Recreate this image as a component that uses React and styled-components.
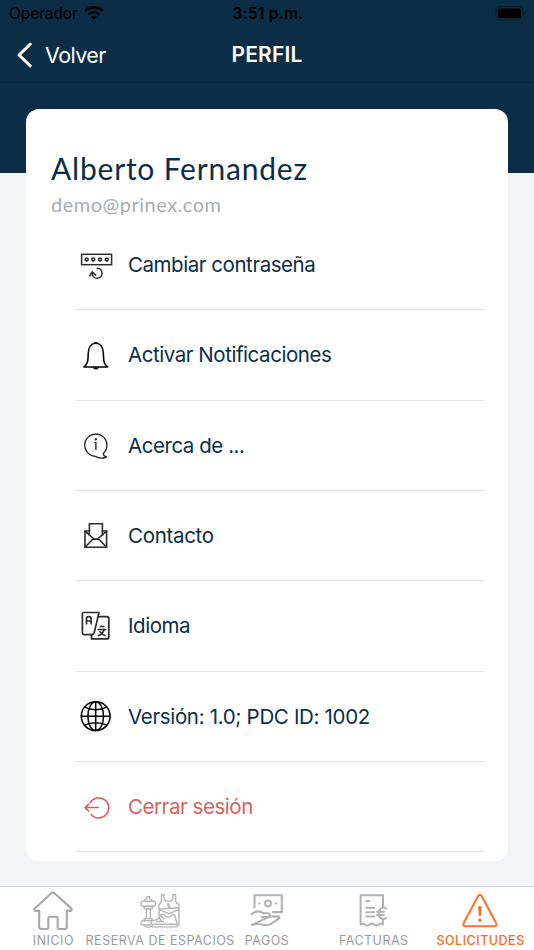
import React from 'react';
import styled, { createGlobalStyle } from 'styled-components';

const GlobalStyle = createGlobalStyle`
  * {
    box-sizing: border-box;
  }
  body {
    margin: 0;
    background: #f3f4f6;
    font-family: Inter, 'Liberation Sans', sans-serif;
  }
`;

const Page = styled.div`
  display: flex;
  flex-direction: column;
  width: 534px;
  height: 950px;
  overflow: hidden;
`;

const StatusBar = styled.div`
  display: grid;
  grid-template-columns: 1fr auto 1fr;
  align-items: center;
  height: 28px;
  padding: 0 7px 1px 9px;
  background: #0b2e46;
  color: #000;
  font-size: 15.5px;
`;

const Carrier = styled.div`
  display: flex;
  align-items: center;
  gap: 6px;
  letter-spacing: -0.1px;
`;

const Clock = styled.div`
  font-weight: 600;
  letter-spacing: 0.25px;
`;

const Battery = styled.div`
  display: flex;
  justify-content: flex-end;
`;

const NavBar = styled.header`
  display: grid;
  grid-template-columns: 1fr auto 1fr;
  align-items: center;
  height: 55px;
  padding: 0 16px 1px;
  background: #0b2e46;
  border-bottom: 1px solid #0a2940;
  color: #fff;
`;

const BackButton = styled.button`
  display: flex;
  align-items: center;
  gap: 11px;
  padding: 0;
  border: none;
  background: none;
  color: inherit;
  font-family: inherit;
  font-size: 21.5px;
  letter-spacing: -0.6px;
`;

const Title = styled.h1`
  margin: 0;
  font-size: 21px;
  font-weight: 600;
  letter-spacing: 0.2px;
`;

const Content = styled.main`
  flex: 1;
  padding: 26px 26px 0;
  background: linear-gradient(#0b2e46 90px, #f3f4f6 90px);
`;

const Card = styled.section`
  height: 752px;
  padding: 38px 24px 0 25px;
  border-radius: 13px;
  background: #fff;
`;

const Name = styled.div`
  font-family: Lato, sans-serif;
  font-size: 30px;
  line-height: 42px;
  letter-spacing: 0.8px;
  color: #0b2e46;
  white-space: nowrap;
`;

const Email = styled.div`
  font-family: Lato, sans-serif;
  font-size: 20px;
  line-height: 31px;
  letter-spacing: 0.5px;
  color: #a9acb1;
`;

const Menu = styled.ul`
  margin: 0 0 0 25px;
  padding: 0;
  list-style: none;
`;

const MenuRow = styled.li`
  display: flex;
  align-items: center;
  gap: 12px;
  height: 90.33px;
  border-bottom: 1px solid #e2e3e4;
  color: ${({ $danger }) => ($danger ? '#d9605f' : '#0b2e46')};
  font-size: 20.5px;
  letter-spacing: ${({ $spacing }) => $spacing || -0.45}px;
  white-space: nowrap;
`;

const RowIcon = styled.svg`
  flex: none;
  width: 40px;
  height: 40px;
  fill: none;
  stroke: ${({ $color }) => $color || '#2c2c2c'};
  stroke-width: ${({ $weight }) => $weight || 1.4};
  stroke-linecap: round;
  stroke-linejoin: round;
`;

const TabBar = styled.nav`
  display: grid;
  grid-template-columns: repeat(5, 1fr);
  height: 64px;
  border-top: 1px solid #d3d4d5;
  background: #fff;
`;

const Tab = styled.div`
  display: flex;
  flex-direction: column;
  align-items: center;
  min-width: 0;
  padding-top: 3px;
  color: ${({ $active }) => ($active ? '#f26f21' : '#9b9b9b')};
  font-size: 12.5px;
  font-weight: ${({ $active }) => ($active ? 500 : 400)};
  line-height: 17px;
  letter-spacing: 0.5px;
  white-space: nowrap;
`;

const TabIcon = styled.svg`
  flex: none;
  width: 44px;
  height: 40px;
  margin-bottom: 2px;
  fill: none;
  stroke: ${({ $color }) => $color || '#a9a9a9'};
  stroke-width: ${({ $weight }) => $weight || 1.8};
  stroke-linecap: round;
  stroke-linejoin: round;
`;

const WifiIcon = () => (
  <svg width='20' height='15' viewBox='0 0 20 15' fill='none' stroke='#000' strokeWidth='2.7'>
    <path d='M1.3 4.9C6.2.1 13.8.1 18.7 4.9' />
    <path d='M4.6 8.4c3-2.9 7.8-2.9 10.8 0' />
    <path d='M7.2 10.8c1.6-1.4 4-1.4 5.6 0L10 13.5z' fill='#000' stroke='none' />
  </svg>
);

const BatteryIcon = () => (
  <svg width='32' height='15' viewBox='0 0 32 15'>
    <rect x='1' y='.6' width='27' height='13.4' rx='4' fill='none' stroke='#07202f' strokeWidth='1.1' />
    <rect x='3' y='2.4' width='23.2' height='9.8' rx='2.2' fill='#000' />
    <path d='M29.8 5c1.7.6 1.700 4 0 4.600z' fill='#07202f' />
  </svg>
);

const BackIcon = () => (
  <svg width='18' height='26' viewBox='0 0 18 26' fill='none' stroke='#fff' strokeWidth='3' strokeLinecap='round' strokeLinejoin='round'>
    <path d='M14.3 2.2L3 13l11.3 10.8' />
  </svg>
);

const PasswordIcon = () => (
  <RowIcon viewBox='0 0 40 40' $weight={1.5}>
    <rect x='5.6' y='9.3' width='30' height='10.4' strokeLinejoin='miter' />
    <circle cx='10.7' cy='14.5' r='1.5' />
    <circle cx='17.3' cy='14.5' r='1.5' />
    <circle cx='24' cy='14.5' r='1.5' />
    <circle cx='30.7' cy='14.5' r='1.5' />
    <path d='M21.3 23.2a5 5 0 1 1-5 6.4' />
    <path d='M13.7 31l2.500-4.100 3.500 3.200' />
  </RowIcon>
);

const BellIcon = () => (
  <RowIcon viewBox='0 0 40 40' $color='#050505' $weight={1.6}>
    <path d='M8 32c2.8-1.8 3.700-4 4-8.500l.3-6c.3-5.500 3.200-9.300 7.500-9.300s7.200 3.800 7.500 9.300l.3 6c.3 4.500 1.200 6.700 4 8.500z' />
    <path d='M17.2 32.700c.8 2 4.600 2 5.400 0z' fill='#050505' strokeWidth='.6' />
    <path d='M18.8 7.700h2.200' />
  </RowIcon>
);

const InfoIcon = () => (
  <RowIcon viewBox='0 0 40 40'>
    <path d='M27.300 28.400a11.100 11.100 0 1 0-8.800 2.800c3.500 2 7.500 2.700 12 .8-2.300-.6-3.300-1.800-3.200-3.600z' />
    <path d='M18.900 17.500h1v6.900' />
    <circle cx='19.800' cy='14.300' r='.5' fill='#2c2c2c' />
  </RowIcon>
);

const MailIcon = () => (
  <RowIcon viewBox='0 0 40 40' $weight={1.6}>
    <path d='M13.400 19.200V7.700h13v11.500' strokeLinejoin='miter' />
    <path d='M13.400 15H9v16.300h21.600V15h-4.200' strokeLinejoin='miter' />
    <path d='M9 15.200l8.400 7.300c1.700 1.300 3.100 1.300 4.800 0l8.400-7.300M9 31.200l8.400-8.700M30.600 31.200l-8.400-8.700' />
  </RowIcon>
);

const LanguageIcon = () => (
  <RowIcon viewBox='0 0 40 40' $weight={1.7}>
    <path d='M23 6.500H7.400c-.6 0-1 .4-1 1v19.600c0 1 .5 1.500 1.500 1.500h8.400c1 0 1.500-.5 1.800-1.500z' />
    <path d='M22.300 10.700h8.500c1.300 0 2 .7 2 2v18.200c0 1.300-.7 2-2 2H15.500v-4' />
    <path d='M10.500 17.700v-5.300c0-1.200.7-1.800 1.800-1.800h1c1.100 0 1.800.6 1.800 1.800v5.300M10.500 15h4.600' />
    <path d='M24.300 20.500h3.400M22.300 23.500h7.200M28.200 23.500c-1 3.200-2.900 5.200-5.700 6M23.900 25.600c1.300 2 3 3.300 5.300 3.900' />
  </RowIcon>
);

const GlobeIcon = () => (
  <RowIcon viewBox='0 0 40 40' $color='#050505' $weight={1.5}>
    <circle cx='19.700' cy='20.200' r='14.400' />
    <ellipse cx='19.700' cy='20.200' rx='7.800' ry='14.400' />
    <path d='M19.700 5.800v28.800M5.300 20.200h28.800' />
    <path d='M8.800 11.200c6 3.300 15.800 3.300 21.800 0M8.800 29.200c6-3.300 15.800-3.300 21.800 0' />
  </RowIcon>
);

const LogoutIcon = () => (
  <RowIcon viewBox='0 0 40 40' $color='#dc5b5f' $weight={1.5}>
    <path d='M14.200 15.800a10 10 0 1 1 1 11.600' />
    <path d='M22.300 20.600h-13.300M12.700 17.100l-3.700 3.500 3.700 3.500' />
  </RowIcon>
);

const HomeIcon = () => (
  <TabIcon viewBox='0 0 44 40' $weight={2.1}>
    <path d='M20.300 3.300L3.800 18.400c-1 1-.5 2.500 1 2.500h3.400v15.800c0 1.500.8 2.300 2.300 2.300h5.200c1.100 0 1.600-.5 1.600-1.600V28.300c0-1 .7-1.600 1.600-1.600h6.200c1 0 1.600.7 1.600 1.600v9.100c0 1.100.5 1.600 1.600 1.600h5.200c1.500 0 2.300-.8 2.300-2.300V20.900h3.400c1.500 0 2-1.500 1-2.500L23.500 3.300c-1.100-.9-2.100-.9-3.200 0z' />
  </TabIcon>
);

const SportIcon = () => (
  <TabIcon viewBox='0 0 44 40' $color='#b5b5b5' $weight={1.4}>
    <path d='M6.300 11.200c.6-1.700 1.600-2.700 2.700-2.700V7.200c0-1 2.600-1 2.600 0v1.300c1.100 0 2.100 1 2.700 2.700' />
    <rect x='3' y='11.300' width='14.600' height='5' rx='2.300' />
    <path d='M5.500 16.500h9.600l-1.300 2.300h-7zM8.300 18.900v9.600M12.300 18.900v9.600M6.800 28.600h7l1.300 2H5.500z' />
    <path d='M12.500 30.600H5.200c-3 0-3 4.400 0 4.400h7.300M6.300 35.200c1 2 4.500 2.600 7 1.300' />
    <path d='M23.500 4.700h2.600v3.400c0 4.600 8.800 4.600 8.800 0V4.700h2.700v5c0 2.300 1 3.900 3.400 4.600v21.300M23.500 4.700v5c0 2.300-.7 3.900-2.500 4.600v11M21 18.700c7 .8 13-.8 20-1.200M21 19.600l10 4 10-4' />
    <path d='M31 14.200c-1.600-1.300-2.300.8-.3 1.500s.8 2.700-.6 1.700' />
    <path d='M13.800 30.500c4 .3 7.200-1.500 9-5.800l2.600-.3c3 3.600 7 3.600 9.200-.1 1.700.2 2.600 1.300 2.900 3.300.3 3 1.800 4.200 1.500 6.700H14c-1.200-1-1.200-2.500-.2-3.800zM14 34.300v2.600h25v-2.600M20.500 27.500l3 3M22.700 25.800l3.200 3M18.500 31.500h7' />
  </TabIcon>
);

const PaymentIcon = () => (
  <TabIcon viewBox='0 0 44 40' $color='#b2b2b2' $weight={2.1}>
    <path d='M9.500 17.500V5.300h27.300v16.800h-9' strokeLinejoin='miter' />
    <circle cx='23' cy='13.400' r='2.900' />
    <path d='M14.300 13.400h.1M31.100 13.400h.1' />
    <path d='M6.800 24.300c2.500-2.400 5-3.400 8.200-2.700 2 .4 2.500 1.700 4.500 1.700h3c2.800 0 3 3.600 0 3.700h-5.800M24.500 26.600l8-.2c2.300 0 2.700 1.300.8 2.400l-7.300 5c-1.600 1-3.200 1.400-5 1.200l-3.500-.4c-3-.4-4.500-1.700-10.700.4z' />
  </TabIcon>
);

const InvoiceIcon = () => (
  <TabIcon viewBox='0 0 44 40' $color='#b2b2b2' $weight={2}>
    <path d='M31 17.500V5.300H8.600v29.300c1.800-1.300 3.100-1.300 4.500 0s3 1.300 4.500 0 3-1.300 4.500 0 3 1.300 4.500 0 3-1.300 4.400 0v-3.800' />
    <path d='M14.300 10.900h3M14.300 17.700h8M14.300 22.300h8M14.300 26.500h8' />
    <path d='M34 18.500c-4-2.600-7.300.6-7.300 4.800s3.300 7.400 7.300 4.800M25 21.700h7M25 25h7' />
  </TabIcon>
);

const WarningIcon = () => (
  <TabIcon viewBox='0 0 44 40' $color='#f5762c' $weight={2.1}>
    <path d='M19.100 6L4.600 33.200c-.9 1.600-.1 3 1.700 3h29.200c1.800 0 2.600-1.400 1.700-3L22.700 6c-.9-1.600-2.700-1.600-3.600 0z' />
    <path d='M19.100 16.300h3.600l-.8 9.700h-2z' fill='#f26f21' stroke='none' />
    <circle cx='20.900' cy='30.200' r='1.700' fill='#f26f21' stroke='none' />
  </TabIcon>
);

const menuItems = [
  { label: 'Cambiar contraseña', Icon: PasswordIcon },
  { label: 'Activar Notificaciones', Icon: BellIcon },
  { label: 'Acerca de ...', Icon: InfoIcon },
  { label: 'Contacto', Icon: MailIcon, spacing: -0.3 },
  { label: 'Idioma', Icon: LanguageIcon },
  { label: 'Versión: 1.0; PDC ID: 1002', Icon: GlobeIcon, spacing: -0.33 },
  { label: 'Cerrar sesión', Icon: LogoutIcon, danger: true },
];

const tabs = [
  { label: 'INICIO', Icon: HomeIcon },
  { label: 'RESERVA DE ESPACIOS', Icon: SportIcon },
  { label: 'PAGOS', Icon: PaymentIcon },
  { label: 'FACTURAS', Icon: InvoiceIcon },
  { label: 'SOLICITUDES', Icon: WarningIcon, active: true },
];

const App = () => {
  return (
    <>
      <GlobalStyle />
      <Page>
        <StatusBar>
          <Carrier>
            Operador
            <WifiIcon />
          </Carrier>
          <Clock>3:51 p.m.</Clock>
          <Battery>
            <BatteryIcon />
          </Battery>
        </StatusBar>
        <NavBar>
          <BackButton>
            <BackIcon />
            Volver
          </BackButton>
          <Title>PERFIL</Title>
        </NavBar>
        <Content>
          <Card>
            <Name>Alberto Fernandez</Name>
            <Email>demo@prinex.com</Email>
            <Menu>
              {menuItems.map(({ label, Icon, danger, spacing }) => (
                <MenuRow key={label} $danger={danger} $spacing={spacing}>
                  <Icon />
                  <span>{label}</span>
                </MenuRow>
              ))}
            </Menu>
          </Card>
        </Content>
        <TabBar>
          {tabs.map(({ label, Icon, active }) => (
            <Tab key={label} $active={active}>
              <Icon />
              {label}
            </Tab>
          ))}
        </TabBar>
      </Page>
    </>
  );
};

export default App;
